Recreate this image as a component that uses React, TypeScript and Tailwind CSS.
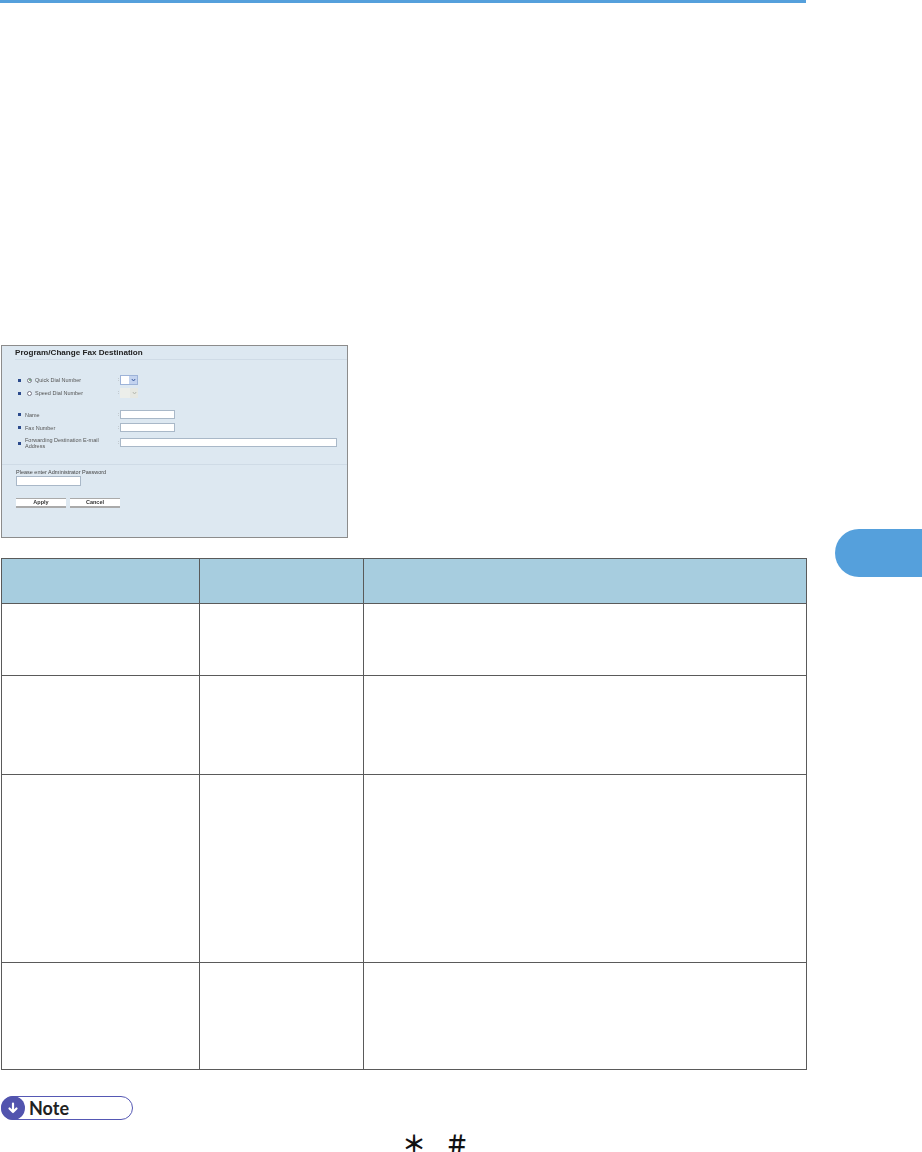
const sans = "font-['Liberation_Sans',Arial,sans-serif]";

function Bullet() {
  return <span className="w-[3px] h-[3px] bg-[#2b4a8c] shrink-0" />;
}

function FormRow({ label, className, children }: { label: React.ReactNode; className: string; children: React.ReactNode }) {
  return (
    <div className={`flex items-center pl-[16px] ${className}`}>
      <Bullet />
      <div className="w-[97px] pl-[4px] flex items-center text-[5.5px] leading-[6px] text-[#555]">{label}</div>
      <span className="w-[2px] text-[5px] text-[#777]">:</span>
      {children}
    </div>
  );
}

function Radio({ on }: { on?: boolean }) {
  return (
    <span className="ml-[2px] mr-[3px] w-[5px] h-[5px] rounded-full border-[0.5px] border-[#778] bg-white flex items-center justify-center shrink-0">
      {on && <span className="w-[2px] h-[2px] rounded-full bg-[#5a9e6a]" />}
    </span>
  );
}

function Select({ disabled }: { disabled?: boolean }) {
  return (
    <div className={`w-[18px] h-[10px] flex ${disabled ? "bg-[#eceeea]" : "bg-white border-[0.5px] border-[#9db3d8]"}`}>
      <div className="flex-1" />
      <div className={`w-[8px] flex items-center justify-center ${disabled ? "bg-[#e6e8e2]" : "bg-[#c3d3ef]"}`}>
        <svg width="5" height="4" viewBox="0 0 5 4" fill="none">
          <path d="M0.8 1 L2.5 3 L4.2 1" stroke={disabled ? "#b5b8b0" : "#3a5a9c"} strokeWidth="1" />
        </svg>
      </div>
    </div>
  );
}

function Field({ className }: { className: string }) {
  return <div className={`bg-white border-[0.5px] border-[#a9b8c8] ${className}`} />;
}

function FaxPanel() {
  return (
    <div className={`w-[347px] h-[193px] ml-px border border-[#8c8c8c] bg-[#dde8f1] flex flex-col ${sans}`}>
      <div className="blur-[0.35px] flex flex-col">
        <div className="ml-[13px] h-[14px] border-b border-[#cfdbe6] pt-[2px] text-[8.1px] leading-[9px] font-bold text-[#222]">
          Program/Change Fax Destination
        </div>
        <FormRow className="mt-[15px] h-[10px]" label={<><Radio on />Quick Dial Number</>}>
          <Select />
        </FormRow>
        <FormRow className="mt-[3px] h-[10px]" label={<><Radio />Speed Dial Number</>}>
          <Select disabled />
        </FormRow>
        <FormRow className="mt-[12px] h-[9px]" label="Name">
          <Field className="w-[55px] h-[9px]" />
        </FormRow>
        <FormRow className="mt-[4px] h-[9px]" label="Fax Number">
          <Field className="w-[55px] h-[9px]" />
        </FormRow>
        <FormRow className="mt-[5px] h-[12px]" label={<span className="w-[88px]">Forwarding Destination E-mail Address</span>}>
          <Field className="w-[217px] h-[9px] -mt-[2px]" />
        </FormRow>
        <div className="mt-[15px] h-px bg-[#cfdbe6]" />
        <div className="mt-[4px] pl-[14px] text-[5.5px] leading-[6px] text-[#444]">Please enter Administrator Password</div>
        <Field className="ml-[14px] mt-[1px] w-[65px] h-[10px]" />
        <div className="ml-[14px] mt-[12px] flex gap-[4px]">
          {["Apply", "Cancel"].map((b) => (
            <div
              key={b}
              className="w-[50px] h-[10px] bg-white border-t border-b-2 border-t-[#aaa] border-b-[#aaa] flex items-center justify-center text-[5.5px] font-bold text-[#333]"
            >
              {b}
            </div>
          ))}
        </div>
      </div>
    </div>
  );
}

function SpecTable() {
  const heights = ["h-[72px]", "h-[99px]", "h-[188px]", "h-[107px]"];
  return (
    <table className="ml-px w-[806px] table-fixed border-collapse mt-[20px]">
      <colgroup>
        <col className="w-[198px]" />
        <col className="w-[164px]" />
        <col />
      </colgroup>
      <thead>
        <tr className="h-[45px] bg-[#a7cddf]">
          <th className="border border-[#5a5a5a]" />
          <th className="border border-[#5a5a5a]" />
          <th className="border border-[#5a5a5a]" />
        </tr>
      </thead>
      <tbody>
        {heights.map((h) => (
          <tr key={h} className={h}>
            <td className="border border-[#5a5a5a]" />
            <td className="border border-[#5a5a5a]" />
            <td className="border border-[#5a5a5a]" />
          </tr>
        ))}
      </tbody>
    </table>
  );
}

function NotePill() {
  return (
    <div className="ml-px mt-[26px] w-[132px] h-[24px] rounded-full border border-[#5558b4] flex items-center bg-white">
      <div className="w-[24px] h-[24px] -ml-px rounded-full bg-[#5254ae] flex items-center justify-center shrink-0">
        <svg width="14" height="14" viewBox="0 0 14 14" fill="none" stroke="#fff" strokeWidth="2.2" strokeLinecap="round" strokeLinejoin="round">
          <path d="M7 2.5V11M3.5 7.5L7 11L10.5 7.5" />
        </svg>
      </div>
      <span className="ml-[4px] text-[18px] leading-none font-bold text-[#222] font-['Lato',sans-serif]">Note</span>
    </div>
  );
}

export default function App() {
  return (
    <div className="w-[922px] h-[1152px] bg-white overflow-hidden flex">
      <div className="w-[807px] shrink-0">
        <div className="w-[806px] h-[3px] bg-[#55a0dc]" />
        <div className="h-[342px]" />
        <FaxPanel />
        <SpecTable />
        <NotePill />
        <div className="mt-[14px] pl-[402px] flex gap-[19px] h-[18px] items-center text-[24px] leading-[18px] font-bold text-[#111] font-['Noto_Sans_CJK_JP',sans-serif]">
          <span>＊</span>
          <span>＃</span>
        </div>
      </div>
      <div className="ml-[28px] mt-[529px] w-[87px] h-[48px] bg-[#55a0dc] rounded-l-[24px]" />
    </div>
  );
}
